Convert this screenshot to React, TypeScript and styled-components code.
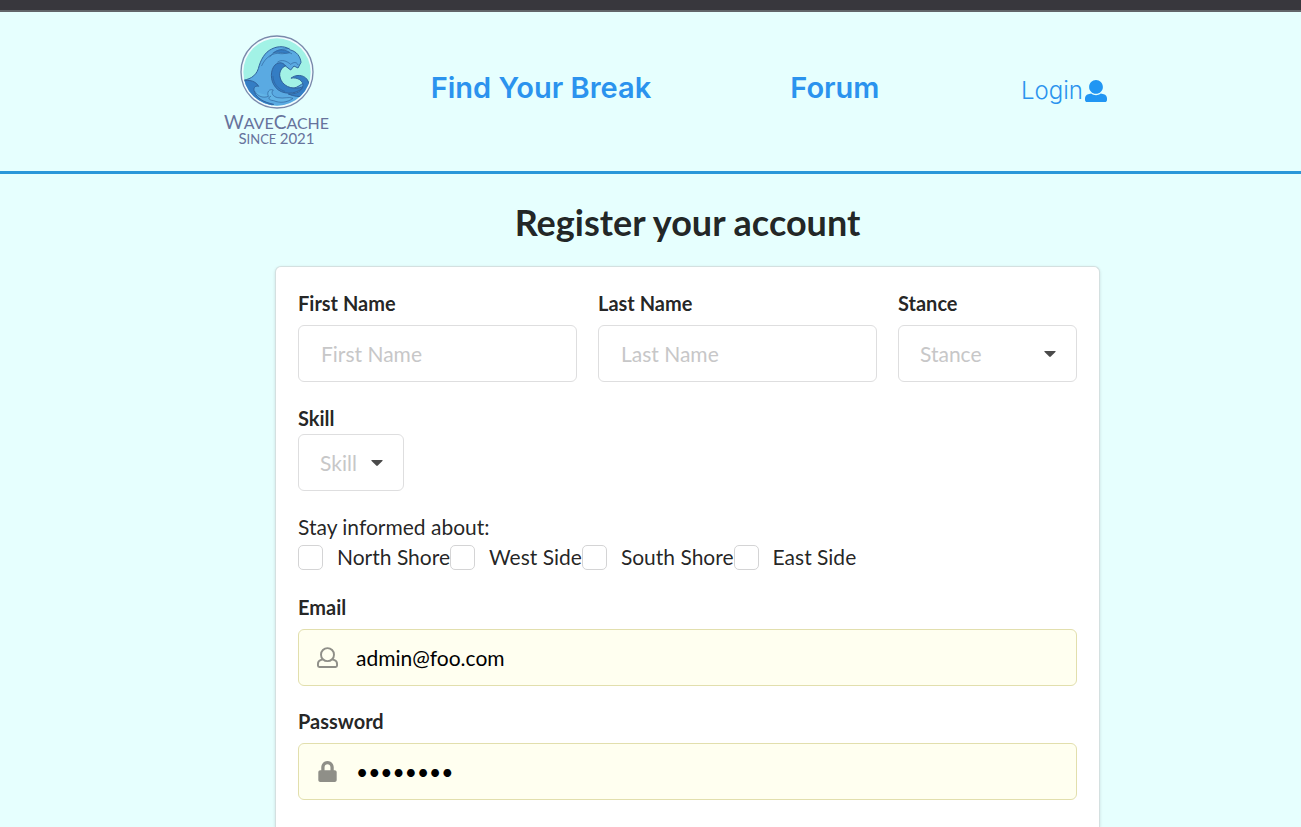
import React from "react";
import styled, { createGlobalStyle } from "styled-components";
import { FaLock } from "react-icons/fa";

const GlobalStyle = createGlobalStyle`
  *, *::before, *::after { box-sizing: border-box; }
  body {
    margin: 0;
    background: #e6fffe;
    color: rgba(0, 0, 0, 0.87);
    font-family: Lato, "Liberation Sans", sans-serif;
    font-size: 21px;
    line-height: 30px;
  }
`;

const Page = styled.div`
  min-height: 100vh;
  display: flex;
  flex-direction: column;
`;

const TopStrip = styled.div`
  height: 12px;
  background: #38373d;
  border-bottom: 2px solid #626569;
`;

const Header = styled.header`
  height: 162px;
  padding: 22px 194px 0 224px;
  border-bottom: 3px solid #2a97d9;
`;

const Nav = styled.nav`
  display: grid;
  grid-template-columns: 207fr 360fr 231fr 85fr;
`;

const Brand = styled.a`
  justify-self: start;
  width: 105px;
  display: flex;
  flex-direction: column;
  align-items: center;
  color: #66739c;
  text-decoration: none;
  text-transform: uppercase;
  white-space: nowrap;
`;

const BrandName = styled.span`
  margin-top: 3px;
  font-size: 16px;
  line-height: 18px;

  & > b {
    font-size: 19px;
    font-weight: 400;
  }
`;

const BrandYear = styled.span`
  font-size: 13px;
  line-height: 12px;

  & > b {
    font-size: 15px;
    font-weight: 400;
  }
`;

const NavLink = styled.a`
  padding-top: 36px;
  color: #2b93ee;
  font-family: Inter, "Liberation Sans", sans-serif;
  font-size: 29px;
  font-weight: 600;
  line-height: 36px;
  text-decoration: none;
  white-space: nowrap;
`;

const LoginLink = styled(NavLink)`
  display: flex;
  align-items: center;
  gap: 2px;
  padding-top: 2px;
  font-size: 24px;
  font-weight: 300;
`;

const Main = styled.main`
  flex: 1;
  display: flex;
  flex-direction: column;
  padding: 26px 201px 0 275px;
`;

const Title = styled.h1`
  margin: 0 0 22px;
  font-size: 36px;
  font-weight: 700;
  line-height: 44px;
  text-align: center;
`;

const Card = styled.form`
  flex: 1;
  display: flex;
  flex-direction: column;
  gap: 21px;
  padding: 22px;
  background: #fff;
  border: 1px solid #d4e0e0;
  border-bottom: 0;
  border-radius: 6px 6px 0 0;
  box-shadow: 0 1px 3px rgba(34, 36, 38, 0.15);
`;

const NameRow = styled.div`
  display: grid;
  grid-template-columns: 279fr 279fr 179fr;
  gap: 21px;
`;

const Label = styled.label`
  font-size: 20px;
  font-weight: 700;
`;

const Field = styled.div<{ $tight?: boolean }>`
  display: flex;
  flex-direction: column;
  gap: ${(p) => (p.$tight ? 1 : 8)}px;

  & > ${Label} {
    line-height: ${(p) => (p.$tight ? 30 : 28)}px;
  }
`;

const Control = styled.div<{ $compact?: boolean }>`
  display: grid;
  align-items: center;
  width: ${(p) => (p.$compact ? "106px" : "100%")};

  & > * {
    grid-area: 1 / 1;
  }
`;

const TextInput = styled.input<{ $filled?: boolean }>`
  width: 100%;
  height: 57px;
  padding: 0 21px 0 ${(p) => (p.$filled ? 57 : 22)}px;
  border: 1px solid ${(p) => (p.$filled ? "#e2dfad" : "#dededf")};
  border-radius: 6px;
  background: ${(p) => (p.$filled ? "#fffff0" : "#fff")};
  color: #000;
  font: inherit;
  outline: none;

  &::placeholder {
    color: #c7c7c8;
    opacity: 1;
  }
`;

const Select = styled.select`
  width: 100%;
  height: 57px;
  padding: 0 21px;
  appearance: none;
  border: 1px solid #dededf;
  border-radius: 6px;
  background: #fff;
  color: #c7c7c8;
  font: inherit;
  outline: none;
`;

const Caret = styled.svg`
  justify-self: end;
  margin-right: 21px;
  pointer-events: none;
`;

const LeadIcon = styled.span`
  z-index: 1;
  display: flex;
  justify-content: center;
  width: 21px;
  margin-left: 19px;
  color: #8f8f88;
  pointer-events: none;
`;

const Topics = styled.fieldset`
  margin: 0;
  padding: 1px 0;
  border: 0;
`;

const Legend = styled.legend`
  padding: 0;
`;

const TopicRow = styled.div`
  display: flex;
  line-height: 28px;
`;

const Topic = styled.label`
  display: flex;
  align-items: center;
  gap: 14px;
  white-space: nowrap;
`;

const Checkbox = styled.input`
  width: 25px;
  height: 25px;
  margin: 0;
  appearance: none;
  border: 1px solid #d4d4d5;
  border-radius: 5px;
  background: #fff;
`;

function WaveLogo() {
  return (
    <svg width="76" height="76" viewBox="86 24 228 228" aria-hidden="true">
      <defs>
        <clipPath id="disc">
          <circle cx="200" cy="138" r="101" />
        </clipPath>
      </defs>
      <circle cx="200" cy="138" r="108" fill="#f1fbff" stroke="#7a89ab" strokeWidth="4" />
      <g clipPath="url(#disc)" stroke="#31639c" strokeWidth="3" strokeLinecap="round" strokeLinejoin="round">
        <rect x="90" y="30" width="220" height="220" fill="#a2f2e6" stroke="none" />
        <path
          d="M90 164C116 162 136 152 144 128C151 101 163 79 184 69C205 58 228 61 241 72C259 77 270 91 272 109L263 126L251 120L241 132L224 119C207 124 203 145 211 163C220 184 242 191 258 184C270 179 278 169 290 168L310 170V250H90Z"
          fill="#5aaae2"
        />
        <path
          d="M225 119C217 106 199 108 190 122C178 142 181 174 204 192C229 209 266 202 282 180C264 190 234 190 217 170C203 152 205 130 225 119Z"
          fill="#347dc4"
        />
        <path
          d="M243 156C255 145 279 145 290 160C300 174 291 188 306 194L283 211C267 213 249 211 234 204C258 205 276 195 278 179C279 165 263 153 243 156Z"
          fill="#347dc4"
        />
        <path
          d="M90 168C106 160 133 160 145 181C134 178 127 186 133 199C139 216 160 229 190 235L160 250C126 238 99 208 90 168Z"
          fill="#347dc4"
        />
        <path
          d="M134 197C142 212 160 217 174 211C169 198 176 188 189 192C180 199 187 212 202 215C222 219 235 211 248 217C230 230 209 232 190 224C177 223 170 216 181 211"
          fill="#62b4e6"
          strokeWidth="2"
        />
        <path
          d="M154 119C165 94 188 78 211 83C224 85 232 75 244 83M178 93C198 65 220 72 236 67M202 108C214 99 229 105 241 115C249 109 258 106 263 116M188 151C189 174 203 189 223 196"
          fill="none"
          strokeWidth="2"
        />
        <path d="M190 80C207 66 226 72 238 79C224 87 212 75 190 80Z" fill="#347dc4" strokeWidth="2" />
      </g>
    </svg>
  );
}

function SolidUser() {
  return (
    <svg width="22" height="22" viewBox="0 0 512 512" fill="#2196f3" aria-hidden="true">
      <path d="M256 0c88 0 160 72 160 160s-72 160-160 160S96 248 96 160 168 0 256 0zm183 334l-71-18c-75 54-166 42-224 0l-71 18C30 345 0 383 0 427v37c0 27 21 48 48 48h416c27 0 48-21 48-48v-37c0-44-30-82-73-93z" />
    </svg>
  );
}

function OutlineUser() {
  return (
    <svg width="21" height="21" viewBox="0 0 22 22" fill="none" stroke="currentColor" strokeWidth="2" strokeLinejoin="round" aria-hidden="true">
      <circle cx="11" cy="8" r="6.8" />
      <path d="M6 13L3.7 13.8C2 14.4 1 16 1 17.7V19.5C1 20.4 1.6 21 2.5 21H19.5C20.4 21 21 20.4 21 19.5V17.7C21 16 20 14.4 18.3 13.8L16 13" />
    </svg>
  );
}

function DownCaret() {
  return (
    <Caret width="12" height="6" viewBox="0 0 12 6" aria-hidden="true">
      <path d="M0.8 0H11.2Q12 0.3 11.4 1L6.8 5.6Q6 6.2 5.2 5.6L0.6 1Q0 0.3 0.8 0Z" fill="#4a4a4a" />
    </Caret>
  );
}

const topics = ["North Shore", "West Side", "South Shore", "East Side"];

export default function App() {
  return (
    <>
      <GlobalStyle />
      <Page>
        <TopStrip />
        <Header>
          <Nav>
            <Brand href="#home">
              <WaveLogo />
              <BrandName>
                <b>W</b>ave<b>C</b>ache
              </BrandName>
              <BrandYear>
                <b>S</b>ince <b>2021</b>
              </BrandYear>
            </Brand>
            <NavLink href="#breaks">Find Your Break</NavLink>
            <NavLink href="#forum">Forum</NavLink>
            <LoginLink href="#login">
              Login
              <SolidUser />
            </LoginLink>
          </Nav>
        </Header>
        <Main>
          <Title>Register your account</Title>
          <Card>
            <NameRow>
              <Field>
                <Label htmlFor="first">First Name</Label>
                <TextInput id="first" placeholder="First Name" />
              </Field>
              <Field>
                <Label htmlFor="last">Last Name</Label>
                <TextInput id="last" placeholder="Last Name" />
              </Field>
              <Field>
                <Label htmlFor="stance">Stance</Label>
                <Control>
                  <Select id="stance" defaultValue="">
                    <option value="">Stance</option>
                  </Select>
                  <DownCaret />
                </Control>
              </Field>
            </NameRow>
            <Field $tight>
              <Label htmlFor="skill">Skill</Label>
              <Control $compact>
                <Select id="skill" defaultValue="">
                  <option value="">Skill</option>
                </Select>
                <DownCaret />
              </Control>
            </Field>
            <Topics>
              <Legend>Stay informed about:</Legend>
              <TopicRow>
                {topics.map((topic) => (
                  <Topic key={topic}>
                    <Checkbox type="checkbox" />
                    {topic}
                  </Topic>
                ))}
              </TopicRow>
            </Topics>
            <Field>
              <Label htmlFor="email">Email</Label>
              <Control>
                <TextInput id="email" type="email" defaultValue="admin@foo.com" $filled />
                <LeadIcon>
                  <OutlineUser />
                </LeadIcon>
              </Control>
            </Field>
            <Field>
              <Label htmlFor="password">Password</Label>
              <Control>
                <TextInput id="password" type="password" defaultValue="changeme" $filled />
                <LeadIcon>
                  <FaLock size={21} />
                </LeadIcon>
              </Control>
            </Field>
          </Card>
        </Main>
      </Page>
    </>
  );
}
